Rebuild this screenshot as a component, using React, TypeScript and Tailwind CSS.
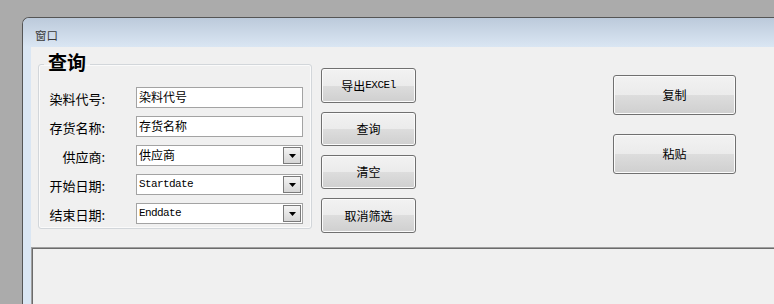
import React from "react";

const btn =
  "flex items-center justify-center rounded-[3px] border border-[#707070] bg-[linear-gradient(to_bottom,#f2f2f2_0%,#ebebeb_50%,#dddddd_50%,#cfcfcf_100%)] shadow-[inset_0_0_0_1px_#fbfbfb] text-[12px] text-black";

function Arrow() {
  return (
    <div className="mr-[1px] flex h-[17px] w-[18px] items-center justify-center border border-[#7a7a7a] bg-[linear-gradient(to_bottom,#f4f4f4,#d6d6d6)]">
      <svg width="7" height="4" viewBox="0 0 7 4">
        <polygon points="0,0 7,0 3.5,4" fill="#000" />
      </svg>
    </div>
  );
}

function Row({ label, value, combo, mono }: { label: string; value: string; combo?: boolean; mono?: boolean }) {
  return (
    <div className="flex h-[21px] items-center">
      <div className="w-[58px] whitespace-nowrap pt-[2px] text-right text-[13px] leading-[16px] text-black">{label}</div>
      <div className="ml-[31px] flex h-[21px] w-[167px] items-start justify-between border border-[#a3a3a3] bg-white">
        <span
          className={
            mono
              ? "pl-[2px] pt-[2px] font-['Liberation_Mono',monospace] text-[11px] leading-[15px] tracking-[-0.6px] text-black"
              : "pl-[2px] pt-[1px] text-[12px] leading-[16px] text-black"
          }
        >
          {value}
        </span>
        {combo && (
          <div className="flex h-full items-center">
            <Arrow />
          </div>
        )}
      </div>
    </div>
  );
}

export default function App() {
  return (
    <div className="h-[304px] w-[774px] overflow-hidden bg-[#ababab] pl-[22px] pt-[17px] font-['Noto_Sans_CJK_SC',sans-serif]">
      <div className="flex h-[287px] flex-col rounded-tl-[7px] border-l border-t border-[#555555] bg-[#d9e5f2]">
        <div className="h-[29px] rounded-tl-[6px] bg-[linear-gradient(to_bottom,#bccadb,#dae6f3)] pl-[12px] pt-[10px] text-[11.5px] leading-[14px] text-[#3a3a3a]">
          窗口
        </div>
        <div className="flex flex-1">
          <div className="w-[8px] bg-[#dae6f3]" />
          <div className="flex flex-1 flex-col bg-[#f0f0f0]">
            <div className="flex h-[200px] pl-[7px] pt-[5px]">
              <fieldset className="h-[177px] w-[274px] rounded-[3px] border border-[#d2d6da] pl-[8px] pr-[8px] pt-[11px] shadow-[inset_0_0_0_1px_#fafafa]">
                <legend className="ml-[-3px] px-[4px] pb-[4px] text-[19px] font-bold leading-[20px] text-black">查询</legend>
                <div className="flex flex-col gap-[8px]">
                  <Row label="染料代号:" value="染料代号" />
                  <Row label="存货名称:" value="存货名称" />
                  <Row label="供应商:" value="供应商" combo />
                  <Row label="开始日期:" value="Startdate" combo mono />
                  <Row label="结束日期:" value="Enddate" combo mono />
                </div>
              </fieldset>
              <div className="ml-[9px] mt-[16px] flex flex-col gap-[9px]">
                <button className={`${btn} h-[35px] w-[95px]`}>
                  导出<span className="font-['Liberation_Mono',monospace] text-[11px] tracking-[-0.5px]">EXCEl</span>
                </button>
                <button className={`${btn} h-[34px] w-[95px]`}>查询</button>
                <button className={`${btn} h-[34px] w-[95px]`}>清空</button>
                <button className={`${btn} h-[35px] w-[95px]`}>取消筛选</button>
              </div>
              <div className="ml-[197px] mt-[23px] flex flex-col gap-[19px]">
                <button className={`${btn} h-[40px] w-[123px]`}>复制</button>
                <button className={`${btn} h-[40px] w-[123px]`}>粘贴</button>
              </div>
            </div>
            <div className="flex flex-1 border-l border-t border-[#a0a0a0]">
              <div className="flex-1 border-l border-t border-[#6b6b6b] bg-[#f0f0f0]" />
            </div>
          </div>
        </div>
      </div>
    </div>
  );
}
